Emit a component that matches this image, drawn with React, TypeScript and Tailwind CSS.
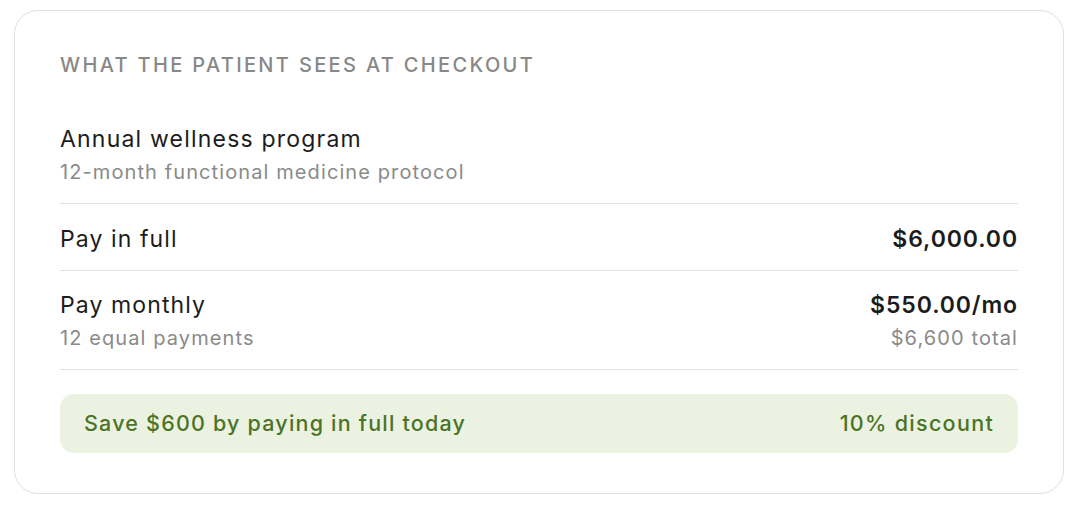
import React from 'react'

interface PriceRowProps {
  label: string
  sub?: string
  price: string
  priceSub?: string
}

const PriceRow: React.FC<PriceRowProps> = ({ label, sub, price, priceSub }) => {
  return (
    <div
      className={`flex items-start justify-between border-b border-[#e4e2dc] ${
        sub ? 'pt-[19px] pb-[18px]' : 'pt-[20px] pb-[16px]'
      }`}
    >
      <div className="flex flex-col">
        <span className="text-[23px] leading-[30px] tracking-[1.1px] text-[#1c1c1c]">{label}</span>
        {sub && (
          <span className="mt-[5px] text-[20px] leading-[26px] tracking-[1.1px] text-[#8a8a8a]">
            {sub}
          </span>
        )}
      </div>
      <div className="flex flex-col items-end">
        <span className="text-[23px] leading-[30px] tracking-[0.9px] font-semibold text-[#1c1c1c]">
          {price}
        </span>
        {priceSub && (
          <span className="mt-[5px] text-[20px] leading-[26px] tracking-[1.1px] text-[#8a8a8a]">
            {priceSub}
          </span>
        )}
      </div>
    </div>
  )
}

export default function App() {
  return (
    <div className="min-h-screen bg-white pt-[10px] pl-[14px] font-['Inter',sans-serif]">
      <div className="w-[1050px] rounded-[24px] border border-[#e2e0da] bg-white px-[45px] pt-[40px] pb-[40px]">
        <h3 className="text-[20px] leading-[28px] font-medium tracking-[2.35px] text-[#888888]">
          WHAT THE PATIENT SEES AT CHECKOUT
        </h3>

        {/* Producto */}
        <div className="mt-[45px] flex flex-col border-b border-[#e4e2dc] pb-[18px]">
          <span className="text-[23px] leading-[30px] tracking-[1.2px] text-[#1c1c1c]">
            Annual wellness program
          </span>
          <span className="mt-[5px] text-[20px] leading-[26px] tracking-[1.1px] text-[#8a8a8a]">
            12-month functional medicine protocol
          </span>
        </div>

        <PriceRow label="Pay in full" price="$6,000.00" />
        <PriceRow
          label="Pay monthly"
          sub="12 equal payments"
          price="$550.00/mo"
          priceSub="$6,600 total"
        />

        <div className="mt-[24px] flex h-[59px] items-center justify-between rounded-[14px] bg-[#ebf2e1] px-[24px]">
          <span className="text-[21.5px] font-medium tracking-[1.2px] text-[#4b7426]">
            Save $600 by paying in full today
          </span>
          <span className="text-[21.5px] font-medium tracking-[1.3px] text-[#4b7426]">10% discount</span>
        </div>
      </div>
    </div>
  )
}
